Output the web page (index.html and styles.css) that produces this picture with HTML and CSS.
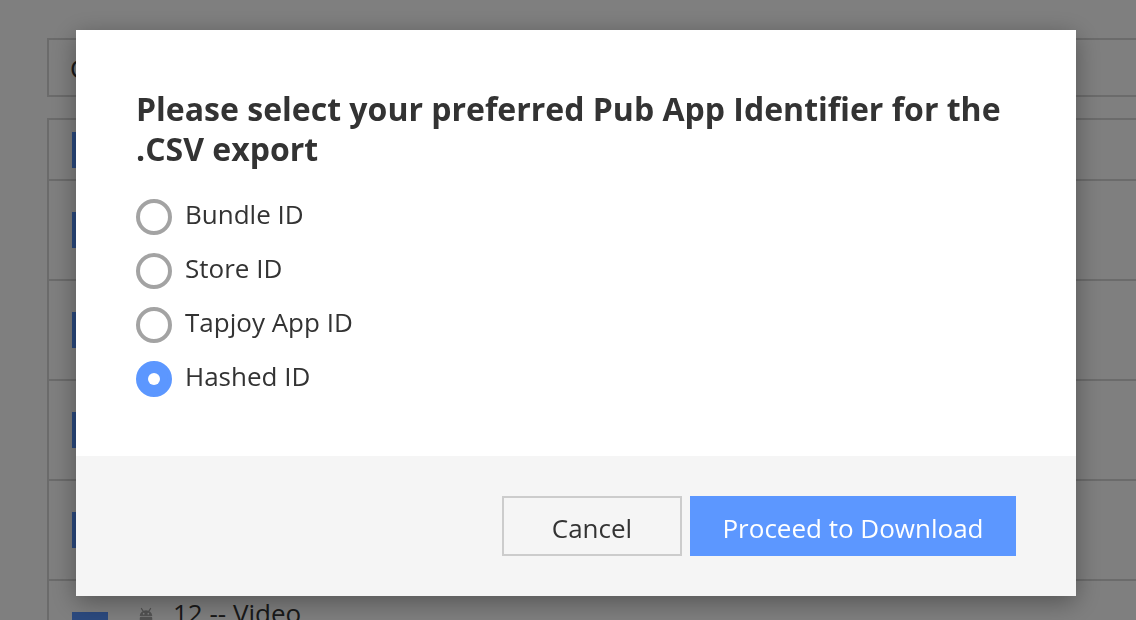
FILE: index.html
```html
<!DOCTYPE html>
<html lang="en">
<head>
    <meta charset="UTF-8">
    <meta name="viewport" content="width=device-width, initial-scale=1.0">
    <title>Placements</title>
    <link rel="stylesheet" href="styles.css">
</head>
<body>
    <div class="page">
        <div class="toolbar">
            <span class="toolbar-label">Columns</span>
        </div>

        <div class="table">
            <div class="table-row table-head">
                <span class="check"></span>
                <span class="cell">Placement</span>
            </div>
            <div class="table-row">
                <span class="check"></span>
                <div class="cell">
                    <div class="cell-title">08 -- Interstitial</div>
                    <div class="cell-sub">Android</div>
                </div>
            </div>
            <div class="table-row">
                <span class="check"></span>
                <div class="cell">
                    <div class="cell-title">09 -- Offerwall</div>
                    <div class="cell-sub">Android</div>
                </div>
            </div>
            <div class="table-row">
                <span class="check"></span>
                <div class="cell">
                    <div class="cell-title">10 -- Rewarded</div>
                    <div class="cell-sub">Android</div>
                </div>
            </div>
            <div class="table-row">
                <span class="check"></span>
                <div class="cell">
                    <div class="cell-title">11 -- Banner</div>
                    <div class="cell-sub">Android</div>
                </div>
            </div>
            <div class="table-row">
                <span class="check"></span>
                <div class="cell">
                    <div class="cell-title">
                        <svg class="platform" viewBox="0 0 24 24" width="20" height="20">
                            <path d="M6.5 3 L8.6 6.3 M17.5 3 L15.4 6.3" stroke="#a6a6a6" stroke-width="1.6" stroke-linecap="round" fill="none"/>
                            <path d="M4.5 12 A7.5 6.8 0 0 1 19.5 12 Z" fill="#a6a6a6"/>
                            <circle cx="9.2" cy="9.2" r="1" fill="#fff"/>
                            <circle cx="14.8" cy="9.2" r="1" fill="#fff"/>
                            <rect x="4.5" y="13" width="15" height="9" rx="1.5" fill="#a6a6a6"/>
                        </svg>
                        12 -- Video
                    </div>
                    <div class="cell-sub">Android</div>
                </div>
            </div>
        </div>
    </div>

    <div class="overlay"></div>

    <div class="modal">
        <div class="modal-body">
            <h2>Please select your preferred Pub App Identifier for the .CSV export</h2>
            <form class="options" id="exportForm">
                <label class="option">
                    <input type="radio" name="identifier" value="bundle">
                    <span>Bundle ID</span>
                </label>
                <label class="option">
                    <input type="radio" name="identifier" value="store">
                    <span>Store ID</span>
                </label>
                <label class="option">
                    <input type="radio" name="identifier" value="tapjoy">
                    <span>Tapjoy App ID</span>
                </label>
                <label class="option">
                    <input type="radio" name="identifier" value="hashed" checked>
                    <span>Hashed ID</span>
                </label>
            </form>
        </div>
        <div class="modal-footer">
            <button type="button" class="btn btn-cancel">Cancel</button>
            <button type="submit" form="exportForm" class="btn btn-primary">Proceed to Download</button>
        </div>
    </div>
</body>
</html>
```

FILE: styles.css
```css
/* Base page */
body {
    margin: 0;
    background-color: #ffffff;
    font-family: 'Open Sans', 'Noto Sans', sans-serif;
    color: #333333;
    overflow: hidden;
    height: 620px;
}

.page {
    padding: 38px 0 0 47px;
}

.toolbar {
    height: 55px;
    border: 2px solid #d6d6d6;
    margin-right: -10px;
    display: flex;
    align-items: center;
    padding-left: 21px;
}

.toolbar-label {
    font-size: 26px;
}

/* Placement table */
.table {
    margin-top: 21px;
    margin-right: -10px;
    border-left: 2px solid #d6d6d6;
    border-top: 2px solid #d6d6d6;
}

.table-row {
    display: flex;
    align-items: center;
    height: 98px;
    padding-left: 23px;
    border-bottom: 2px solid #d6d6d6;
}

.table-head {
    height: 59px;
}

.check {
    width: 36px;
    height: 36px;
    background-color: #5794ff;
    flex-shrink: 0;
}

.cell {
    margin-left: 28px;
    font-size: 26px;
}

.cell-title {
    line-height: 36px;
    display: flex;
    align-items: center;
}

.cell-sub {
    line-height: 34px;
    font-size: 20px;
    color: #888888;
}

.platform {
    margin-right: 17px;
    margin-top: 6px;
}

/* Modal */
.overlay {
    position: fixed;
    inset: 0;
    background-color: rgba(0, 0, 0, 0.5);
}

.modal {
    position: fixed;
    top: 30px;
    left: 76px;
    width: 1000px;
    background-color: #ffffff;
    box-shadow: 0 6px 24px rgba(0, 0, 0, 0.35);
}

.modal-body {
    padding: 59px 60px 59px;
}

.modal-body h2 {
    margin: 0;
    font-size: 32px;
    line-height: 40px;
    font-weight: 700;
    color: #333333;
}

.options {
    margin-top: 30px;
    display: flex;
    flex-direction: column;
    gap: 18px;
}

.option {
    display: flex;
    align-items: flex-start;
    height: 36px;
    font-size: 26px;
    color: #333333;
    cursor: pointer;
}

.option span {
    line-height: 30px;
}

.option input {
    appearance: none;
    margin: 0 13px 0 0;
    width: 36px;
    height: 36px;
    border: 4px solid #a3a3a3;
    border-radius: 50%;
    box-sizing: border-box;
    display: flex;
    align-items: center;
    justify-content: center;
}

.option input:checked {
    border-color: #5c97ff;
    background-color: #5c97ff;
}

.option input:checked::after {
    content: '';
    width: 12px;
    height: 12px;
    border-radius: 50%;
    background-color: #ffffff;
}

.modal-footer {
    background-color: #f5f5f5;
    padding: 40px 60px;
    display: flex;
    justify-content: flex-end;
    gap: 8px;
}

.btn {
    height: 60px;
    padding: 4px 0 0;
    font-family: inherit;
    font-size: 26px;
    border-radius: 0;
    cursor: pointer;
}

.btn-cancel {
    width: 180px;
    background-color: transparent;
    border: 2px solid #cccccc;
    color: #333333;
}

.btn-primary {
    width: 326px;
    background-color: #5c97ff;
    border: none;
    color: #ffffff;
}

.btn-primary:hover {
    background-color: #4a86f0;
}
```
